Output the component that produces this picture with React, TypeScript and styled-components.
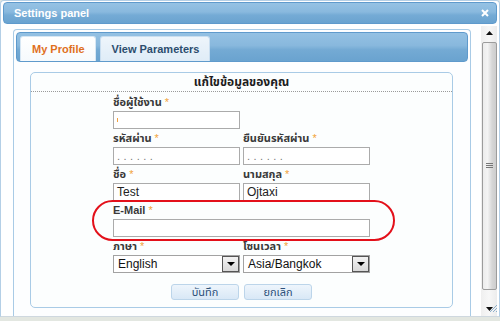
import React from "react";
import styled, { createGlobalStyle } from "styled-components";

const FONT = `"Liberation Sans", Arial, "Noto Sans Thai", "Noto Sans", "DejaVu Sans", sans-serif`;

const GlobalStyle = createGlobalStyle`
  html, body { margin: 0; padding: 0; }
  body {
    background: #e3e7e1;
    font-family: ${FONT};
    width: 500px;
    height: 321px;
    overflow: hidden;
  }
`;

const Dialog = styled.div`
  box-sizing: border-box;
  width: 500px;
  height: 317px;
  background: #ffffff;
  border: 1px solid #b4cfe6;
  border-bottom-color: #cfd8df;
  border-radius: 4px 4px 0 0;
  padding: 1px 2px 0 2px;
  display: flex;
  flex-direction: column;
`;

const TitleBar = styled.div`
  box-sizing: border-box;
  height: 22px;
  flex: none;
  border: 1px solid #5f9acc;
  border-radius: 4px;
  background: linear-gradient(to bottom, #95c2e4 0%, #89b9de 45%, #75abd5 60%, #6aa3d0 100%);
  display: flex;
  align-items: center;
  justify-content: space-between;
  padding: 0 7px 0 10px;
  color: #ffffff;
  font-weight: bold;
  font-size: 11px;
`;

const Body = styled.div`
  flex: 1;
  min-height: 0;
  display: flex;
`;

const Viewport = styled.div`
  box-sizing: border-box;
  width: 458px;
  margin: 5px 0 0 10px;
  border: 1px solid #a9cbe6;
  border-bottom: none;
  border-radius: 4px 4px 0 0;
  padding: 2px 2px 0 2px;
  background: #fdfeff;
  display: flex;
  flex-direction: column;
`;

const TabBar = styled.div`
  box-sizing: border-box;
  height: 30px;
  border: 1px solid #5f9acc;
  border-radius: 4px;
  background: linear-gradient(to bottom, #94c1e3 0%, #88b8dd 45%, #74aad4 60%, #6aa3cf 100%);
  display: flex;
  align-items: flex-end;
  gap: 4px;
  padding: 0 3px;
`;

const Tab = styled.div<{ $active?: boolean }>`
  box-sizing: border-box;
  height: 25px;
  padding: 0 10px 0 11px;
  border: 1px solid ${(p) => (p.$active ? "#d7e7f4" : "#c9def0")};
  border-bottom: none;
  border-radius: 3px 3px 0 0;
  background: ${(p) =>
    p.$active
      ? "linear-gradient(to bottom, #ffffff, #f6fafd)"
      : "linear-gradient(to bottom, #eef5fb, #dfecf7)"};
  color: ${(p) => (p.$active ? "#e0701e" : "#2c4d6e")};
  font-weight: bold;
  font-size: 11px;
  display: flex;
  align-items: center;
`;

const Panel = styled.div`
  padding: 10px 15px 0 14px;
`;

const Fieldset = styled.div`
  position: relative;
  box-sizing: border-box;
  height: 236px;
  border: 1px solid #a9cbe6;
  border-radius: 5px;
  background: #fcfefe;
  display: flex;
  flex-direction: column;
  align-items: center;
`;

const Legend = styled.div`
  align-self: stretch;
  box-sizing: border-box;
  height: 19px;
  border-bottom: 1px dotted #9a9a9a;
  text-align: center;
  font-weight: bold;
  font-size: 12px;
  line-height: 18px;
  color: #1d1d1d;
`;

const Form = styled.div`
  width: 257px;
  margin-top: 1px;
  display: flex;
  flex-direction: column;
`;

const Row = styled.div<{ $cols?: number }>`
  display: grid;
  grid-template-columns: ${(p) => (p.$cols === 1 ? "257px" : "127px 127px")};
  column-gap: 3px;
`;

const Field = styled.div`
  display: flex;
  flex-direction: column;
`;

const Label = styled.div`
  height: 18px;
  line-height: 19px;
  font-size: 11px;
  font-weight: bold;
  color: #3a3a3a;
  white-space: nowrap;
`;

const Star = styled.span`
  color: #f2a33a;
  font-weight: normal;
  margin-left: 3px;
`;

const TextBox = styled.div<{ $muted?: boolean }>`
  position: relative;
  box-sizing: border-box;
  height: 18px;
  border: 1px solid #ababab;
  background: #ffffff;
  padding: 0 3px;
  font-size: ${(p) => (p.$muted ? "11px" : "12px")};
  line-height: 16px;
  color: ${(p) => (p.$muted ? "#7a7a7a" : "#222")};
  letter-spacing: ${(p) => (p.$muted ? "3.5px" : "0")};
  white-space: nowrap;
  overflow: hidden;
`;

const Caret = styled.span`
  position: absolute;
  left: 3px;
  top: 6px;
  width: 1px;
  height: 4px;
  background: #f0a040;
`;

const Select = styled.div`
  box-sizing: border-box;
  height: 18px;
  border: 1px solid #a2a2a2;
  background: #ffffff;
  display: flex;
  align-items: stretch;
  font-size: 12px;
  color: #111;
`;

const SelectText = styled.div`
  flex: 1;
  padding-left: 4px;
  line-height: 16px;
  white-space: nowrap;
`;

const DropButton = styled.div`
  box-sizing: border-box;
  width: 17px;
  border: 1px solid #555;
  background: linear-gradient(to bottom, #f2f2f2, #d9d9d9);
  display: flex;
  align-items: center;
  justify-content: center;
`;

const Buttons = styled.div`
  margin-top: 11px;
  display: flex;
  gap: 5px;
`;

const Button = styled.div`
  box-sizing: border-box;
  width: 68px;
  height: 16px;
  border: 1px solid #bcd5ea;
  border-radius: 3px;
  background: linear-gradient(to bottom, #eef5fc, #d9e8f6);
  color: #2c5079;
  font-size: 11px;
  line-height: 14px;
  text-align: center;
`;

const Highlight = styled.div`
  position: absolute;
  left: 61px;
  top: 127px;
  width: 303px;
  height: 41px;
  box-sizing: border-box;
  border: 2px solid #e3101a;
  border-radius: 21px;
  pointer-events: none;
`;

const ScrollBar = styled.div`
  box-sizing: border-box;
  width: 16px;
  margin: 2px 0 0 10px;
  background: linear-gradient(to right, #efefef, #f7f7f7 50%, #ececec);
  display: flex;
  flex-direction: column;
  align-items: center;
  position: relative;
`;

const Arrow = styled.div`
  height: 14px;
  width: 16px;
  display: flex;
  align-items: center;
  justify-content: center;
  flex: none;
`;

const Thumb = styled.div`
  box-sizing: border-box;
  width: 15px;
  height: 248px;
  margin-top: 2px;
  border: 1px solid #9c9c9c;
  border-radius: 2px;
  background: linear-gradient(to right, #ececec, #f4f4f4 35%, #d6d6d6 70%, #cdcdcd);
  display: flex;
  align-items: center;
  justify-content: center;
`;

const Spacer = styled.div`
  flex: 1;
`;

const Grip = styled.div`
  position: absolute;
  right: 0;
  bottom: 0;
`;

const App: React.FC = () => (
  <>
    <GlobalStyle />
    <Dialog>
      <TitleBar>
        <span>Settings panel</span>
        <svg width="8" height="8" viewBox="0 0 8 8">
          <path d="M1 1 L7 7 M7 1 L1 7" stroke="#ffffff" strokeWidth="2" />
        </svg>
      </TitleBar>
      <Body>
        <Viewport>
          <TabBar>
            <Tab $active>My Profile</Tab>
            <Tab>View Parameters</Tab>
          </TabBar>
          <Panel>
            <Fieldset>
              <Legend>แก้ไขข้อมูลของคุณ</Legend>
              <Form>
                <Row>
                  <Field>
                    <Label>
                      ชื่อผู้ใช้งาน<Star>*</Star>
                    </Label>
                    <TextBox>
                      <Caret />
                    </TextBox>
                  </Field>
                </Row>
                <Row>
                  <Field>
                    <Label>
                      รหัสผ่าน<Star>*</Star>
                    </Label>
                    <TextBox $muted>......</TextBox>
                  </Field>
                  <Field>
                    <Label>
                      ยืนยันรหัสผ่าน<Star>*</Star>
                    </Label>
                    <TextBox $muted>......</TextBox>
                  </Field>
                </Row>
                <Row>
                  <Field>
                    <Label>
                      ชื่อ<Star>*</Star>
                    </Label>
                    <TextBox>Test</TextBox>
                  </Field>
                  <Field>
                    <Label>
                      นามสกุล<Star>*</Star>
                    </Label>
                    <TextBox>Ojtaxi</TextBox>
                  </Field>
                </Row>
                <Row $cols={1}>
                  <Field>
                    <Label>
                      E-Mail<Star>*</Star>
                    </Label>
                    <TextBox />
                  </Field>
                </Row>
                <Row>
                  <Field>
                    <Label>
                      ภาษา<Star>*</Star>
                    </Label>
                    <Select>
                      <SelectText>English</SelectText>
                      <DropButton>
                        <svg width="8" height="4" viewBox="0 0 8 4">
                          <path d="M0 0 H8 L4 4 Z" fill="#000" />
                        </svg>
                      </DropButton>
                    </Select>
                  </Field>
                  <Field>
                    <Label>
                      โซนเวลา<Star>*</Star>
                    </Label>
                    <Select>
                      <SelectText>Asia/Bangkok</SelectText>
                      <DropButton>
                        <svg width="8" height="4" viewBox="0 0 8 4">
                          <path d="M0 0 H8 L4 4 Z" fill="#000" />
                        </svg>
                      </DropButton>
                    </Select>
                  </Field>
                </Row>
              </Form>
              <Buttons>
                <Button>บันทึก</Button>
                <Button>ยกเลิก</Button>
              </Buttons>
              <Highlight />
            </Fieldset>
          </Panel>
        </Viewport>
        <ScrollBar>
          <Arrow style={{ marginTop: 0 }}>
            <svg width="7" height="4" viewBox="0 0 7 4">
              <path d="M0 4 H7 L3.5 0 Z" fill="#111" />
            </svg>
          </Arrow>
          <Thumb>
            <svg width="7" height="6" viewBox="0 0 7 6">
              <path d="M0 0.5 H7 M0 2.5 H7 M0 4.5 H7" stroke="#777" strokeWidth="1" />
            </svg>
          </Thumb>
          <Spacer />
          <Arrow>
            <svg width="7" height="4" viewBox="0 0 7 4">
              <path d="M0 0 H7 L3.5 4 Z" fill="#111" />
            </svg>
          </Arrow>
          <Grip>
            <svg width="8" height="8" viewBox="0 0 8 8">
              <path d="M8 1 L1 8 M8 4 L4 8 M8 7 L7 8" stroke="#8fb0cc" strokeWidth="1" />
            </svg>
          </Grip>
        </ScrollBar>
      </Body>
    </Dialog>
  </>
);

export default App;
